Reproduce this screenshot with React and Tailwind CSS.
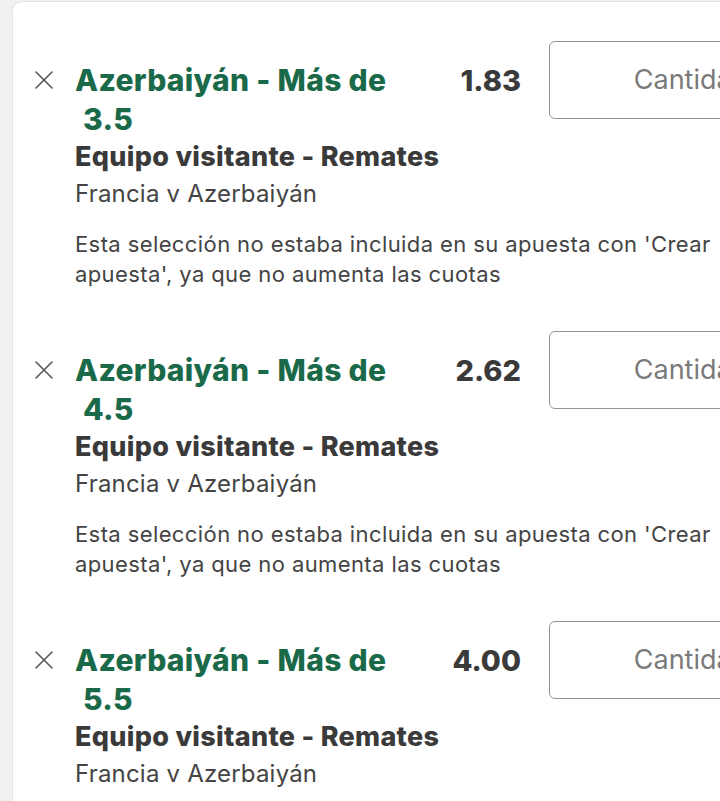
import React from 'react';

const BETS = [
  { line: '3.5', odds: '1.83', note: true },
  { line: '4.5', odds: '2.62', note: true },
  { line: '5.5', odds: '4.00', note: true },
];

function CloseIcon() {
  return (
    <svg width="20" height="20" viewBox="0 0 20 20" className="text-[#555]">
      <path d="M2 2 L18 18 M18 2 L2 18" stroke="currentColor" strokeWidth="1.6" strokeLinecap="round" />
    </svg>
  );
}

function BetRow({ bet }) {
  return (
    <div className="flex flex-col pb-[42px]">
      <div className="flex items-start">
        <div className="w-[62px] pl-[21px] pt-[29px] shrink-0">
          <CloseIcon />
        </div>
        <div className="w-[360px] mt-[20px] shrink-0 text-[30px] leading-[39px] font-extrabold tracking-[0.3px] text-[#1a6a4a]">
          <div className="whitespace-nowrap">Azerbaiyán - Más de</div>
          <div className="pl-[8px]">{bet.line}</div>
        </div>
        <div className="w-[86px] shrink-0 mt-[20px] text-right text-[29px] leading-[39px] font-extrabold text-[#3a3a3a]">
          {bet.odds}
        </div>
        <div className="ml-[28px] w-[284px] h-[78px] shrink-0 rounded-[6px] border-[1.5px] border-[#949494] bg-white flex items-center justify-center text-[27px] text-[#7a7a7a]">
          Cantidad
        </div>
      </div>
      <div className="pl-[62px]">
        <p className="text-[27px] leading-[36px] font-extrabold tracking-[0.3px] text-[#3a3a3a] whitespace-nowrap">
          Equipo visitante - Remates
        </p>
        <p className="mt-[2px] text-[24px] leading-[34px] tracking-[0.2px] text-[#444] whitespace-nowrap">
          Francia v Azerbaiyán
        </p>
        {bet.note && (
          <p className="mt-[18px] text-[22px] leading-[30px] tracking-[0.4px] text-[#444]">
            <span className="block whitespace-nowrap">Esta selección no estaba incluida en su apuesta con 'Crear</span>
            <span className="block whitespace-nowrap">apuesta', ya que no aumenta las cuotas</span>
          </p>
        )}
      </div>
    </div>
  );
}

export default function App() {
  return (
    <div
      className="w-[720px] h-[801px] overflow-hidden bg-[#f0f0f0] pl-[12px] pt-[1px]"
      style={{ fontFamily: 'Inter, "Noto Sans", sans-serif' }}
    >
      <div className="w-[900px] min-h-[900px] bg-white border-l border-t border-[#e2e2e2] rounded-tl-[10px] pt-[39px]">
        {BETS.map((b) => (
          <BetRow key={b.line} bet={b} />
        ))}
      </div>
    </div>
  );
}
